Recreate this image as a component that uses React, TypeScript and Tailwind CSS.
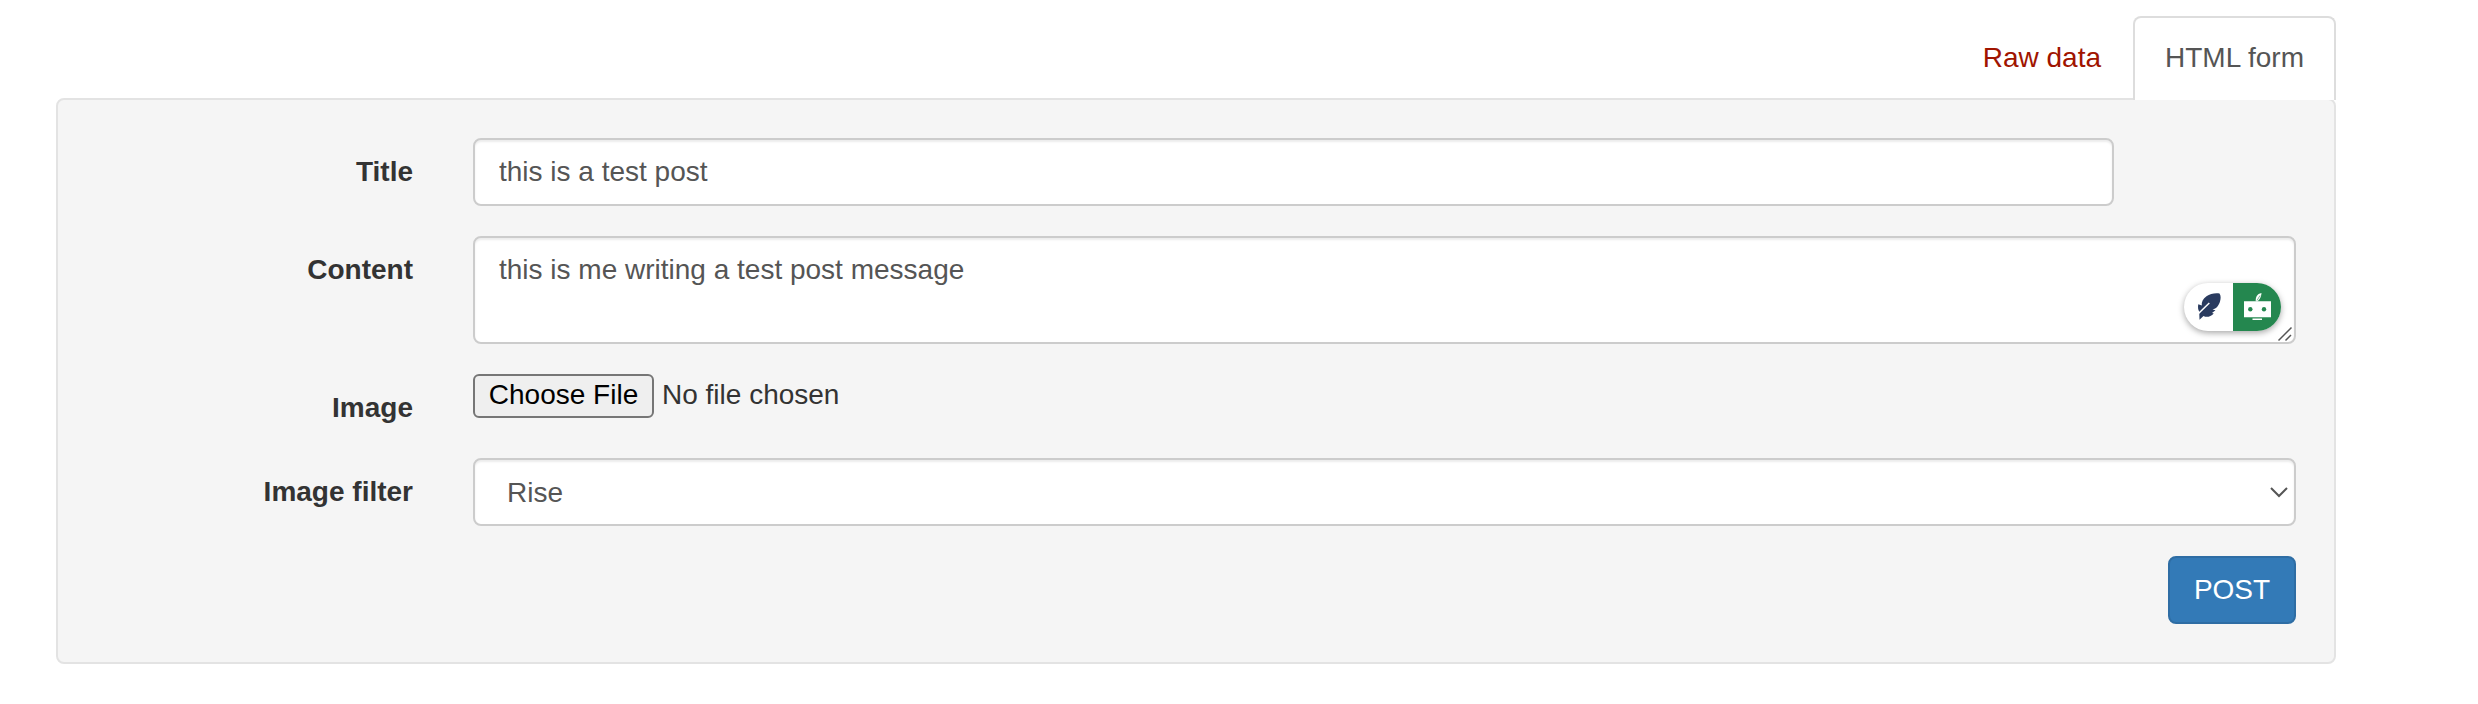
import React from 'react';

const control =
  'border-2 border-[#ccc] rounded-lg bg-white text-[#555] shadow-[inset_0_2px_2px_rgba(0,0,0,0.075)]';

function Row({ label, children, className = '' }: { label: string; children: React.ReactNode; className?: string }) {
  return (
    <div className={`flex ${className}`}>
      <label className="w-[355px] shrink-0 pt-3.5 text-right font-bold leading-10 text-[#333]">{label}</label>
      <div className="ml-[60px] flex-1">{children}</div>
    </div>
  );
}

function Assistant() {
  return (
    <div className="absolute right-[15px] bottom-[13px] flex h-12 w-[97px] rounded-full bg-white shadow-[0_2px_6px_rgba(0,0,0,0.35)]">
      <svg viewBox="0 0 97 48" className="h-12 w-[97px]">
        <path d="M49 0H73A24 24 0 0 1 73 48H49Z" fill="#24874f" />
        <path
          d="M35.500 10.500C31 9.800 26 10.800 22.500 13.200C19 15.600 17.300 19 17.800 22.500L14.300 21.200C13.700 24 14 26.500 15.200 28.500L15.500 36.800L19.500 33C22.500 34.600 26.500 34 29.800 30.500L28 30L31.500 27.300L28.500 26.500C32.500 25.600 34.800 22.500 36 18.500C36.900 15.500 37 12.500 35.500 10.500Z"
          fill="#2a3b5f"
        />
        <path d="M14.500 30.500L25.300 20" stroke="#fff" strokeWidth="1.500" />
        <path d="M71.800 18.300C71.300 14.500 73 10.800 77.500 10C77.400 13 76 16.500 73.300 18.500Z" fill="#fff" />
        <path d="M73 17.500L76 12.500" stroke="#24874f" strokeWidth="0.600" />
        <path d="M60 18.200H87V34.300H60ZM68.500 35.400H78V37H68.500Z" fill="#fff" />
        <circle cx="66.300" cy="26.200" r="2.200" fill="#24874f" />
        <circle cx="80" cy="26.200" r="2.200" fill="#24874f" />
      </svg>
    </div>
  );
}

export default function App() {
  return (
    <main className="h-[704px] w-[2478px] bg-white pt-4 pl-14 font-['Liberation_Sans',Arial,sans-serif] text-[28px] leading-10">
      <div className="w-[2280px]">
        <nav className="relative z-10 -mb-0.5 flex h-[84px] justify-end">
          <a className="px-8 pt-[22px] text-[#a01400]">Raw data</a>
          <a className="w-[203px] rounded-t-lg border-2 border-b-0 border-[#ddd] bg-white pt-5 pl-[30px] text-[#555]">HTML form</a>
        </nav>
        <form className="h-[566px] rounded-lg border-2 border-[#e3e3e3] bg-[#f5f5f5] pt-[38px] pr-[38px]">
          <Row label="Title" className="h-[98px]">
            <input readOnly defaultValue="this is a test post" className={`block h-[68px] w-[1641px] px-6 outline-none ${control}`} />
          </Row>
          <Row label="Content" className="h-[138px]">
            <div className="relative">
              <div className={`h-[108px] px-6 py-3 ${control}`}>this is me writing a test post message</div>
              <Assistant />
              <svg viewBox="0 0 16 16" className="absolute right-[3px] bottom-0.5 size-4">
                <path d="M1.500 14.500L14.500 1.500M8.500 14.500L14 9" stroke="#555" strokeWidth="1.500" />
              </svg>
            </div>
          </Row>
          <Row label="Image" className="h-[84px]">
            <div className="flex">
              <button type="button" className="h-11 w-[181px] rounded-md border-2 border-[#767676] bg-[#efefef] pb-0.5 leading-9 text-black">
                Choose File
              </button>
              <span className="pt-px pl-2 text-[#333]">No file chosen</span>
            </div>
          </Row>
          <Row label="Image filter" className="h-[98px]">
            <div className={`flex h-[68px] items-center justify-between pl-8 ${control}`}>
              <span className="pt-0.5">Rise</span>
              <svg viewBox="0 0 18 12" className="mr-[6px] h-3 w-[18px]">
                <path d="M1 2L9 10L17 2" fill="none" stroke="#555" strokeWidth="2" />
              </svg>
            </div>
          </Row>
          <div className="flex justify-end">
            <button type="button" className="h-[68px] w-32 rounded-lg border-2 border-[#2e6da4] bg-[#337ab7] text-white">POST</button>
          </div>
        </form>
      </div>
    </main>
  );
}
